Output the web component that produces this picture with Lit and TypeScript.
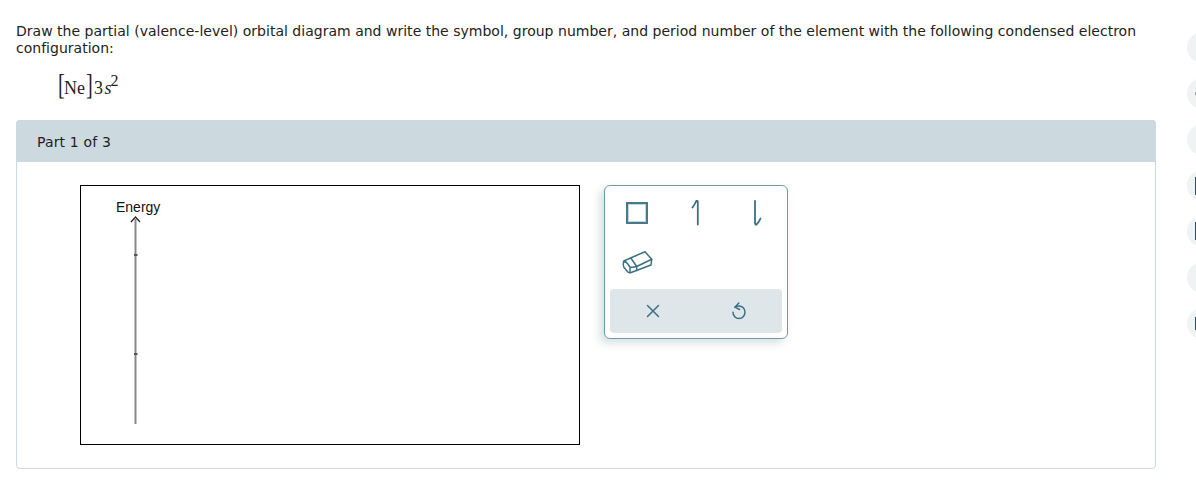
import { LitElement, html, css, svg } from 'lit';
import { customElement } from 'lit/decorators.js';

// what shows of the cut-off icons in the rail: offset and height inside each circle
const railDots: ({ top: number; height: number; color: string } | null)[] = [
    null,
    { top: 14, height: 3, color: '#9aa8ad' },
    null,
    { top: 7, height: 18, color: '#1f5566' },
    { top: 6, height: 18, color: '#1f5566' },
    null,
    { top: 9, height: 13, color: '#1f5566' },
];

@customElement('app-root')
export class AppRoot extends LitElement {
    static styles = css`
        :host {
            display: flex;
            width: 1196px;
            height: 480px;
            overflow: hidden;
            background: #fff;
            color: #222;
            font-family: 'DejaVu Sans', Verdana, sans-serif;
            font-size: 14px;
            line-height: 17px;
        }
        .main {
            box-sizing: border-box;
            width: 1187px;
            flex: none;
            padding: 23px 31px 0 16px;
        }
        .question {
            margin: 0;
            letter-spacing: 0.015px;
        }
        .formula {
            display: flex;
            align-items: baseline;
            height: 63px;
            padding: 10px 0 0 41px;
            box-sizing: border-box;
            font-family: 'Liberation Serif', 'Times New Roman', serif;
            font-size: 18px;
            line-height: 34px;
        }
        .bracket {
            font-size: 29px;
            font-weight: 100;
            line-height: 34px;
            transform: scaleX(0.7);
            width: 7px;
        }
        .formula .three {
            margin-left: 2px;
        }
        .formula i {
            font-style: italic;
            margin-left: 1.500px;
        }
        .formula sup {
            font-size: 16px;
            line-height: 0;
            position: relative;
            top: -8px;
            margin-left: -1px;
        }
        .panel {
            box-sizing: border-box;
            height: 349px;
            border: 1px solid #ccd9df;
            border-radius: 4px;
        }
        .panel-head {
            height: 42px;
            margin: -1px -1px 0;
            padding: 2px 0 0 21px;
            box-sizing: border-box;
            display: flex;
            align-items: center;
            background: #ccd9df;
            border-radius: 4px 4px 0 0;
            letter-spacing: 0.15px;
        }
        .panel-body {
            display: flex;
            align-items: flex-start;
            gap: 24px;
            padding: 23px 0 0 63px;
        }
        .canvas {
            position: relative;
            box-sizing: border-box;
            width: 500px;
            height: 260px;
            border: 1px solid #000;
        }
        .canvas svg {
            position: absolute;
            left: 0;
            top: 0;
        }
        .energy {
            position: absolute;
            left: 35px;
            top: 13px;
            color: #111;
            font-family: 'Liberation Sans', Arial, sans-serif;
            font-size: 14px;
            line-height: 16px;
        }
        .tools {
            box-sizing: border-box;
            width: 184px;
            height: 154px;
            padding-top: 2px;
            border: 1px solid #6f9ba8;
            border-radius: 6px;
            box-shadow: -4px 4px 8px rgba(70, 110, 125, 0.22);
            background: #fff;
        }
        .tool-grid {
            display: grid;
            grid-template-columns: repeat(3, 60px);
            grid-auto-rows: 49px;
            padding-left: 2px;
        }
        .tool {
            display: flex;
            align-items: center;
            justify-content: center;
        }
        .actions {
            display: flex;
            width: 172px;
            height: 44px;
            margin: 3px 0 0 5px;
            background: #dfe6ea;
            border-radius: 4px;
        }
        .actions .tool {
            flex: 1;
        }
        .tools svg {
            display: block;
            fill: none;
            stroke: #3b7083;
            stroke-width: 1.500;
            stroke-linecap: round;
            stroke-linejoin: round;
        }
        .tools svg.arrow {
            stroke-width: 1.800;
        }
        .square {
            box-sizing: border-box;
            width: 22px;
            height: 22px;
            border: 2px solid #457a8b;
            box-shadow: inset 0 0 0 1px #c5d5da;
        }
        .rail {
            flex: none;
            width: 9px;
            overflow: hidden;
            padding-top: 32px;
            display: flex;
            flex-direction: column;
            gap: 15px;
        }
        .dot {
            flex: none;
            position: relative;
            width: 31px;
            height: 31px;
            border-radius: 50%;
            background: #eff3f4;
        }
        .mark {
            position: absolute;
            left: 8px;
            width: 2px;
        }
    `;

    render() {
        return html`
            <div class="main">
                <p class="question">
                    Draw the partial (valence-level) orbital diagram and write the symbol, group number, and period number of the element with the following condensed electron configuration:
                </p>
                <div class="formula">
                    <span class="bracket">[</span><span>Ne</span><span class="bracket">]</span><span class="three">3</span><i>s</i><sup>2</sup>
                </div>
                <section class="panel">
                    <div class="panel-head">Part 1 of 3</div>
                    <div class="panel-body">
                        <div class="canvas">
                            <svg width="498" height="258" viewBox="0 0 498 258">
                                ${svg`
                                    <path d="M54.5 33V238" stroke="#888" stroke-width="2" fill="none" />
                                    <path d="M50 36L54.500 31L59 36" stroke="#222" stroke-width="1.200" fill="none" />
                                    <path d="M53 69H56.500M53 168H56.500" stroke="#555" stroke-width="2" fill="none" />
                                `}
                            </svg>
                            <span class="energy">Energy</span>
                        </div>
                        <div class="tools">
                            <div class="tool-grid">
                                <div class="tool"><div class="square"></div></div>
                                <div class="tool">
                                    <svg class="arrow" width="12" height="26" viewBox="0 0 12 26">
                                        <path d="M1.500 7.500C3 5.500 4.500 3 5.500 0.500C6.500 0 6.800 1 6.800 3V24.500" />
                                    </svg>
                                </div>
                                <div class="tool">
                                    <svg class="arrow" width="12" height="26" viewBox="0 0 12 26">
                                        <path d="M4 1V22.500C4 24.500 4.800 25 5.500 24.500C7 23 8.500 21 9.500 18.500" />
                                    </svg>
                                </div>
                                <div class="tool">
                                    <svg width="31" height="24" viewBox="0 0 31 24">
                                        <path d="M1.500 12Q1.500 10.500 4 10L23 1.700L29.700 9.300L29 15L8.500 22.700Q7 23 6 22L2 17.500Q1 16 1.500 12Z" />
                                        <path d="M9 8.300L14.700 16.500L14.700 20.500M14.700 16.500L29.700 9.300M1.800 12Q4 11.500 5 13L8 17L8 22.500M8 17Q11 17.500 14.700 16.500" />
                                    </svg>
                                </div>
                            </div>
                            <div class="actions">
                                <div class="tool">
                                    <svg width="14" height="14" viewBox="0 0 14 14">
                                        <path d="M1.500 1.500L12.500 12.500M12.500 1.500L1.500 12.500" />
                                    </svg>
                                </div>
                                <div class="tool">
                                    <svg width="14" height="18" viewBox="0 0 14 18">
                                        <path d="M3 5.200C4.200 4.300 5.500 4 7 4C10.500 4 13 6.700 13 10.200C13 13.700 10.300 16.500 7 16.500C3.700 16.500 1 13.700 1 10.200" />
                                        <path d="M6.800 1L3 5.200L7.500 7.500" />
                                    </svg>
                                </div>
                            </div>
                        </div>
                    </div>
                </section>
            </div>
            <aside class="rail">
                ${railDots.map(
                    (mark) => html`<div class="dot">
                        ${mark
                            ? html`<span
                                  class="mark"
                                  style="top:${mark.top}px;height:${mark.height}px;background:${mark.color}"
                              ></span>`
                            : ''}
                    </div>`
                )}
            </aside>
        `;
    }
}
